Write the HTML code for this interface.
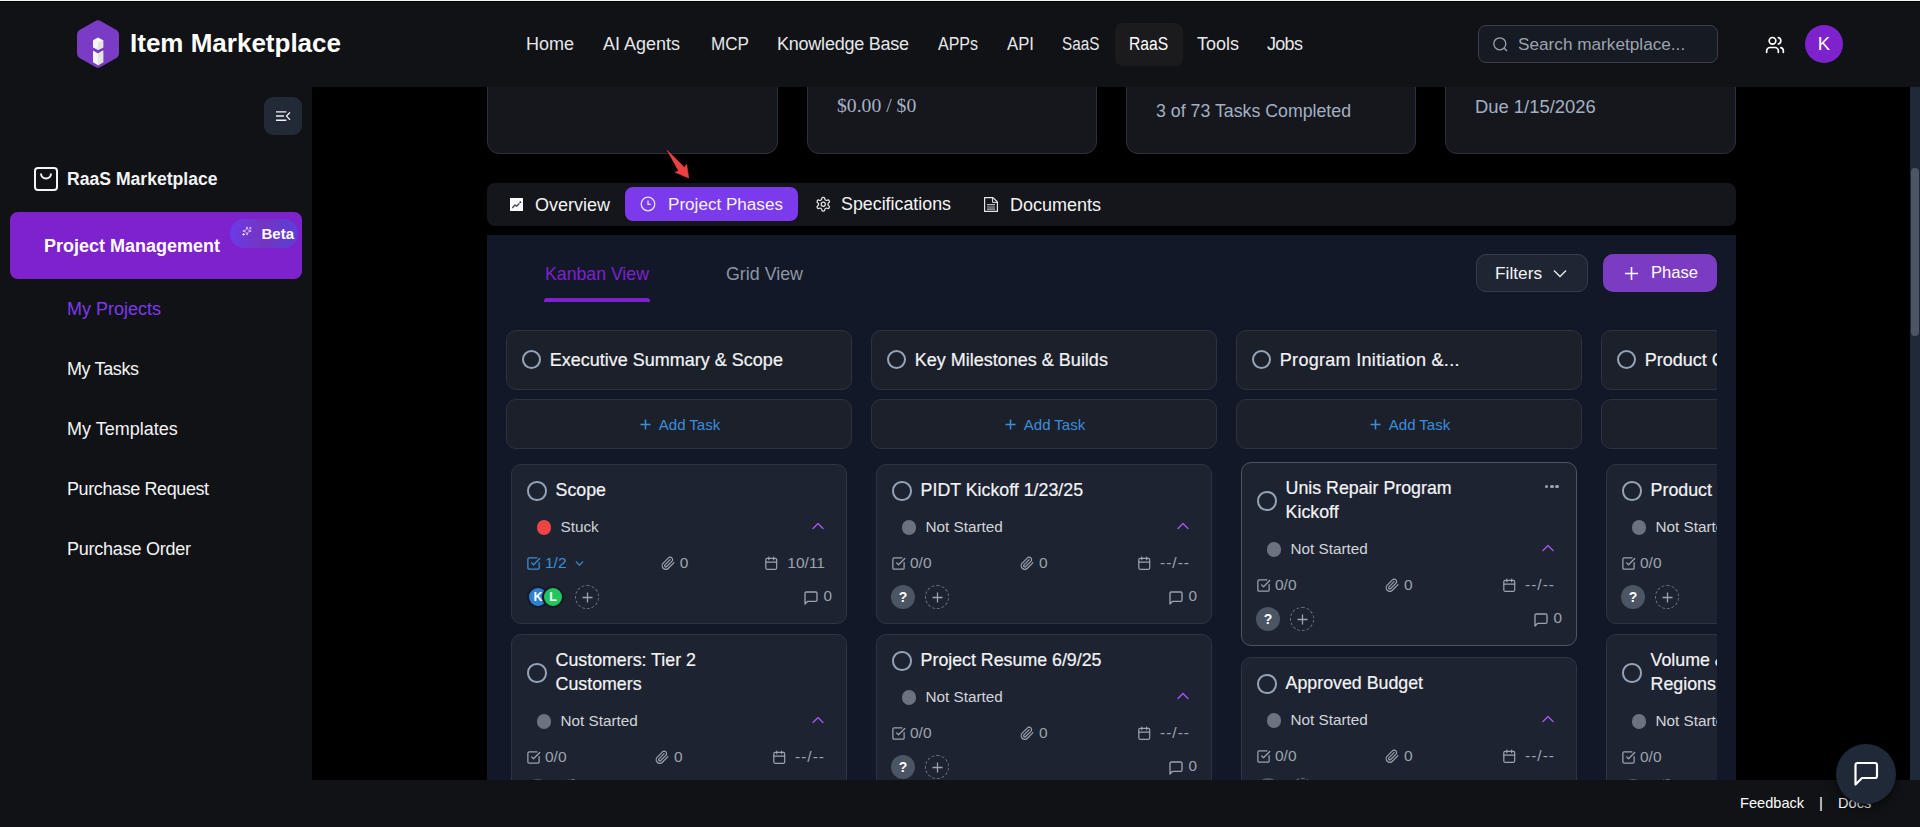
<!DOCTYPE html>
<html><head><meta charset="utf-8">
<style>
*{box-sizing:border-box;margin:0;padding:0}
html,body{width:1920px;height:827px;overflow:hidden;background:#111215;font-family:"Liberation Sans",sans-serif}
.a{position:absolute}
.t{position:absolute;white-space:nowrap;line-height:1}
svg{position:absolute;overflow:visible}
</style></head>
<body>
<!-- top edge lines -->
<div class="a" style="left:0;top:0;width:1920px;height:1px;background:#f4f4f4"></div>
<div class="a" style="left:0;top:1px;width:1920px;height:1px;background:#000"></div>

<!-- HEADER -->
<svg style="left:77px;top:20px" width="42" height="48" viewBox="0 0 42 48">
  <path d="M18 1.2 Q21 -0.5 24 1.2 L39 9.8 Q42 11.5 42 15 L42 33 Q42 36.5 39 38.2 L24 46.8 Q21 48.5 18 46.8 L3 38.2 Q0 36.5 0 33 L0 15 Q0 11.5 3 9.8 Z" fill="#7b3cc5"/>
  <path d="M16 20.2 L21 17.6 L26.2 20.2 L26.2 27.4 L21 30 L16 27.4 Z" fill="#f6f6f4"/>
  <path d="M21 22.6 L26.2 20.2 L26.2 27.4 L21 30 Z" fill="#e6e4e0"/>
  <path d="M16 30.6 L21 33.4 L26.2 30.6 L26.2 42.2 L21 45.2 L16 42.2 Z" fill="#f6f6f4"/>
  <path d="M21 33.4 L26.2 30.6 L26.2 42.2 L21 45.2 Z" fill="#e6e4e0"/>
</svg>
<div class="t" style="left:130px;top:30px;font-size:26px;font-weight:bold;color:#fff">Item Marketplace</div>

<div class="a" style="left:1115px;top:23px;width:68px;height:43px;border-radius:8px;background:#1b1a1d"></div>
<div class="t nav" style="left:526px;top:35px">Home</div>
<div class="t nav" style="left:603px;top:35px">AI Agents</div>
<div class="t nav" style="left:711px;top:35px;transform:scaleX(0.95);transform-origin:0 0">MCP</div>
<div class="t nav" style="left:777px;top:35px;letter-spacing:-0.23px">Knowledge Base</div>
<div class="t nav" style="left:938px;top:35px;transform:scaleX(0.89);transform-origin:0 0">APPs</div>
<div class="t nav" style="left:1007px;top:35px;transform:scaleX(0.93);transform-origin:0 0">API</div>
<div class="t nav" style="left:1062px;top:35px;transform:scaleX(0.85);transform-origin:0 0">SaaS</div>
<div class="t nav" style="left:1129px;top:35px;color:#fff;transform:scaleX(0.87);transform-origin:0 0">RaaS</div>
<div class="t nav" style="left:1197px;top:35px">Tools</div>
<div class="t nav" style="left:1267px;top:35px;letter-spacing:-0.7px">Jobs</div>
<style>.nav{font-size:18px;color:#e5e7eb}</style>

<!-- search -->
<div class="a" style="left:1478px;top:25px;width:240px;height:38px;border-radius:8px;background:#161a22;border:1px solid #3a3f4a"></div>
<svg style="left:1493px;top:37px" width="15" height="15" viewBox="0 0 15 15"><circle cx="6.8" cy="6.8" r="6" fill="none" stroke="#9ca3af" stroke-width="1.3"/><path d="M11.2 11.2 L14 14" stroke="#9ca3af" stroke-width="1.3"/></svg>
<div class="t" style="left:1518px;top:36px;font-size:17.2px;color:#9ca3af">Search marketplace...</div>

<!-- users icon -->
<svg style="left:1765.2px;top:35px" width="20" height="20" viewBox="0 0 24 24" fill="none" stroke="#fff" stroke-width="2" stroke-linecap="round" stroke-linejoin="round"><path d="M16 21v-2a4 4 0 0 0-4-4H6a4 4 0 0 0-4 4v2"/><circle cx="9" cy="7" r="4"/><path d="M22 21v-2a4 4 0 0 0-3-3.87"/><path d="M16 3.13a4 4 0 0 1 0 7.75"/></svg>
<div class="a" style="left:1805px;top:25px;width:38px;height:38px;border-radius:50%;background:#7e22ce"></div>
<div class="t" style="left:1805px;top:35px;width:38px;text-align:center;font-size:18.5px;color:#fff">K</div>

<!-- SIDEBAR -->
<div class="a" style="left:264px;top:97px;width:38px;height:38px;border-radius:9px;background:#222a38"></div>
<svg style="left:276px;top:110px" width="16" height="12" viewBox="0 0 16 12">
  <path d="M0 1.9 H10.4 M0 6 H8 M0 10.2 H10.4" stroke="#eef0f3" stroke-width="1.4"/>
  <path d="M14 2.4 L10.6 6.1 L14 9.9" fill="none" stroke="#eef0f3" stroke-width="1.4"/>
</svg>
<svg style="left:34px;top:167px" width="24" height="24" viewBox="0 0 24 24">
  <rect x="1" y="1" width="22" height="22" rx="3" fill="none" stroke="#f3f4f6" stroke-width="2"/>
  <path d="M7 6.5 A5 5 0 0 0 17 6.5" fill="none" stroke="#f3f4f6" stroke-width="2"/>
</svg>
<div class="t" style="left:67px;top:171px;font-size:17.6px;font-weight:bold;color:#f3f4f6">RaaS Marketplace</div>

<div class="a" style="left:10px;top:212px;width:292px;height:67px;border-radius:8px;background:#7e22ce"></div>
<div class="t" style="left:44px;top:237px;font-size:18px;font-weight:bold;color:#fff">Project Management</div>
<div class="a" style="left:230px;top:219px;width:68px;height:29px;border-radius:15px;background:linear-gradient(90deg,#6b3be8,#7434c0 50%,#5a3fd8)"></div>
<svg style="left:241.5px;top:226px" width="10" height="10" viewBox="0 0 24 24" fill="none" stroke="#e0b0ee" stroke-width="2.4" stroke-linecap="round" stroke-linejoin="round"><path d="M9.937 15.5A2 2 0 0 0 8.5 14.063l-6.135-1.582a.5.5 0 0 1 0-.962L8.5 9.936A2 2 0 0 0 9.937 8.5l1.582-6.135a.5.5 0 0 1 .963 0L14.063 8.5A2 2 0 0 0 15.5 9.937l6.135 1.581a.5.5 0 0 1 0 .964L15.5 14.063a2 2 0 0 0-1.437 1.437l-1.582 6.135a.5.5 0 0 1-.963 0z"/><path d="M20 3v4M22 5h-4"/><circle cx="3.5" cy="20" r="1.5" fill="#fff" stroke="#fff"/></svg>
<div class="t" style="left:261.5px;top:226px;font-size:15px;font-weight:bold;color:#fff">Beta</div>

<div class="t side" style="left:67px;top:300px;color:#7c3aed">My Projects</div>
<div class="t side" style="left:67px;top:360px;letter-spacing:-0.38px">My Tasks</div>
<div class="t side" style="left:67px;top:420px">My Templates</div>
<div class="t side" style="left:67px;top:480px;letter-spacing:-0.4px">Purchase Request</div>
<div class="t side" style="left:67px;top:540px;letter-spacing:-0.23px">Purchase Order</div>
<style>.side{font-size:18px;color:#f3f4f6}</style>

<!-- MAIN -->
<div class="a" id="main" style="left:0;top:0;width:1920px;height:827px;clip-path:inset(87px 10px 47px 312px)">
<div class="a" style="left:312px;top:87px;width:1608px;height:693px;background:#000"></div>
<!-- stat cards -->
<div class="a stat" style="left:487px;width:291px"></div>
<div class="a stat" style="left:807px;width:290px"></div>
<div class="a stat" style="left:1126px;width:290px"></div>
<div class="a stat" style="left:1445px;width:291px"></div>
<div class="t" style="left:837px;top:96px;font-size:19.7px;font-family:'Liberation Serif',serif;color:#a6b2c6">$0.00 / $0</div>
<div class="t" style="left:1156px;top:103px;font-size:17.75px;color:#a3b0c4">3 of 73 Tasks Completed</div>
<div class="t" style="left:1475px;top:98px;font-size:18.4px;color:#a3b0c4">Due 1/15/2026</div>
<!-- arrow -->
<svg style="left:660px;top:145px" width="35" height="40" viewBox="0 0 35 40">
  <path d="M7.2 5.3 L24.5 22.4 L26.6 19.2 L28.7 33.1 L15.1 27.3 L18.6 25.9 Z" fill="#ec4141" stroke="#ec4141" stroke-width="0.6" stroke-linejoin="round"/>
</svg>
<!-- tab bar -->
<div class="a" style="left:487px;top:183px;width:1249px;height:43px;border-radius:8px;background:#15161b"></div>
<div class="a" style="left:625px;top:187px;width:173px;height:34px;border-radius:8px;background:#7c3aed"></div>
<svg style="left:510px;top:198px" width="13" height="13" viewBox="0 0 13 13"><rect width="13" height="13" fill="#fbfbfb"/><path d="M2.6 9.6 L4.9 7 L6.6 8.2 L9 5.8" fill="none" stroke="#3a4250" stroke-width="1.3" stroke-linecap="round" stroke-linejoin="round"/><circle cx="10.3" cy="4.2" r="0.9" fill="#222"/></svg>
<div class="t tab" style="left:535px;top:196px">Overview</div>
<svg style="left:640px;top:196px" width="16" height="16" viewBox="0 0 16 16"><circle cx="8" cy="8" r="6.8" fill="none" stroke="#e9e0fb" stroke-width="1.3"/><path d="M8 4.5 V8.3 H10.8" fill="none" stroke="#e9e0fb" stroke-width="1.3"/></svg>
<div class="t tab" style="left:668px;top:196px;font-size:17.1px">Project Phases</div>
<svg style="left:814.5px;top:196px" width="16.5" height="16.5" viewBox="0 0 24 24"><path d="M12.22 2h-.44a2 2 0 0 0-2 2v.18a2 2 0 0 1-1 1.73l-.43.25a2 2 0 0 1-2 0l-.15-.08a2 2 0 0 0-2.73.73l-.22.38a2 2 0 0 0 .73 2.73l.15.1a2 2 0 0 1 1 1.72v.51a2 2 0 0 1-1 1.74l-.15.09a2 2 0 0 0-.73 2.73l.22.38a2 2 0 0 0 2.73.73l.15-.08a2 2 0 0 1 2 0l.43.25a2 2 0 0 1 1 1.73V20a2 2 0 0 0 2 2h.44a2 2 0 0 0 2-2v-.18a2 2 0 0 1 1-1.73l.43-.25a2 2 0 0 1 2 0l.15.08a2 2 0 0 0 2.73-.73l.22-.39a2 2 0 0 0-.73-2.73l-.15-.08a2 2 0 0 1-1-1.74v-.5a2 2 0 0 1 1-1.74l.15-.09a2 2 0 0 0 .73-2.73l-.22-.38a2 2 0 0 0-2.73-.73l-.15.08a2 2 0 0 1-2 0l-.43-.25a2 2 0 0 1-1-1.73V4a2 2 0 0 0-2-2z" fill="none" stroke="#e5e7eb" stroke-width="1.8"/><circle cx="12" cy="12" r="3" fill="none" stroke="#e5e7eb" stroke-width="1.8"/></svg>
<div class="t tab" style="left:841px;top:196px;font-size:17.83px">Specifications</div>
<svg style="left:984px;top:197px" width="14" height="15" viewBox="0 0 14 15"><path d="M0.6 0.6 H9 L13.4 5 V14.4 H0.6 Z" fill="none" stroke="#e5e7eb" stroke-width="1.2" stroke-linejoin="round"/><path d="M8.6 0.8 V5.4 H13.2" fill="none" stroke="#e5e7eb" stroke-width="1"/><path d="M3 7.6 H11 M3 10 H11 M3 12.2 H11" stroke="#b8bcc4" stroke-width="1.2"/></svg>
<div class="t tab" style="left:1010px;top:196px">Documents</div>

<!-- kanban container -->
<div class="a" style="left:487px;top:235px;width:1249px;height:560px;background:#121827"></div>
<div class="t" style="left:545px;top:266px;font-size:17.7px;color:#7e22ce">Kanban View</div>
<div class="a" style="left:544px;top:298px;width:106px;height:4px;border-radius:3px 3px 0 0;background:#7e22ce"></div>
<div class="t" style="left:726px;top:266px;font-size:17.84px;color:#8e96a3">Grid View</div>
<div class="a" style="left:1476px;top:254px;width:112px;height:38px;border-radius:10px;background:#1f2633;border:1px solid #363e4c"></div>
<div class="t" style="left:1495px;top:265px;font-size:17.3px;color:#f3f4f6">Filters</div>
<svg style="left:1553px;top:269px" width="14" height="9" viewBox="0 0 14 9"><path d="M1 1.5 L7 7.5 L13 1.5" fill="none" stroke="#e5e7eb" stroke-width="1.4"/></svg>
<div class="a" style="left:1603px;top:254px;width:114px;height:38px;border-radius:10px;background:#7b3bc3"></div>
<svg style="left:1624px;top:266px" width="15" height="15" viewBox="0 0 15 15"><path d="M7.5 1 V14 M1 7.5 H14" stroke="#fff" stroke-width="1.6"/></svg>
<div class="t" style="left:1651px;top:265px;font-size:16.6px;color:#fff">Phase</div>
<div id="board" class="a" style="left:506px;top:300px;width:1211px;height:480px;overflow:hidden">
<div class="a colh" style="left:0px;top:30px"></div>
<div class="a ring" style="left:16px;top:50px"></div>
<div class="t" style="left:43.8px;top:51.26px;font-size:18px;color:#f3f4f6;-webkit-text-stroke:0.2px #f3f4f6;">Executive Summary &amp; Scope</div>
<div class="a colh" style="left:0px;top:99px;height:50px"></div>
<div class="a" style="left:0px;top:99px;width:346px;height:50px;display:flex;justify-content:center;align-items:center;padding-left:2px;color:#3b8edb"><svg style="position:relative;margin-right:8px;top:0px" width="11" height="11" viewBox="0 0 11 11"><path d="M5.5 0.5V10.5M0.5 5.5H10.5" stroke="#3b8edb" stroke-width="1.5"/></svg><span style="font-size:15px;position:relative;top:0px">Add Task</span></div>
<div class="a colh" style="left:365px;top:30px"></div>
<div class="a ring" style="left:381px;top:50px"></div>
<div class="t" style="left:408.8px;top:51.26px;font-size:18px;color:#f3f4f6;-webkit-text-stroke:0.2px #f3f4f6;">Key Milestones &amp; Builds</div>
<div class="a colh" style="left:365px;top:99px;height:50px"></div>
<div class="a" style="left:365px;top:99px;width:346px;height:50px;display:flex;justify-content:center;align-items:center;padding-left:2px;color:#3b8edb"><svg style="position:relative;margin-right:8px;top:0px" width="11" height="11" viewBox="0 0 11 11"><path d="M5.5 0.5V10.5M0.5 5.5H10.5" stroke="#3b8edb" stroke-width="1.5"/></svg><span style="font-size:15px;position:relative;top:0px">Add Task</span></div>
<div class="a colh" style="left:730px;top:30px"></div>
<div class="a ring" style="left:746px;top:50px"></div>
<div class="t" style="left:773.8px;top:51.26px;font-size:18px;color:#f3f4f6;-webkit-text-stroke:0.2px #f3f4f6;letter-spacing:0.3px;">Program Initiation &amp;...</div>
<div class="a colh" style="left:730px;top:99px;height:50px"></div>
<div class="a" style="left:730px;top:99px;width:346px;height:50px;display:flex;justify-content:center;align-items:center;padding-left:2px;color:#3b8edb"><svg style="position:relative;margin-right:8px;top:0px" width="11" height="11" viewBox="0 0 11 11"><path d="M5.5 0.5V10.5M0.5 5.5H10.5" stroke="#3b8edb" stroke-width="1.5"/></svg><span style="font-size:15px;position:relative;top:0px">Add Task</span></div>
<div class="a colh" style="left:1095px;top:30px"></div>
<div class="a ring" style="left:1111px;top:50px"></div>
<div class="t" style="left:1138.8px;top:51.26px;font-size:18px;color:#f3f4f6;-webkit-text-stroke:0.2px #f3f4f6;">Product Catalog</div>
<div class="a colh" style="left:1095px;top:99px;height:50px"></div>
<div class="a" style="left:1095px;top:99px;width:346px;height:50px;display:flex;justify-content:center;align-items:center;padding-left:2px;color:#3b8edb"><svg style="position:relative;margin-right:8px;top:0px" width="11" height="11" viewBox="0 0 11 11"><path d="M5.5 0.5V10.5M0.5 5.5H10.5" stroke="#3b8edb" stroke-width="1.5"/></svg><span style="font-size:15px;position:relative;top:0px">Add Task</span></div>
<div class="a card" style="left:5px;top:164px;height:160px"></div>
<div class="a ring" style="left:21px;top:181.25px;width:19.5px;height:19.5px"></div>
<div class="t" style="left:49.6px;top:182.43px;font-size:17.8px;color:#f3f4f6;-webkit-text-stroke:0.2px #f3f4f6;">Scope</div>
<div class="a" style="left:30.5px;top:220px;width:14.5px;height:14.5px;border-radius:50%;background:#ef4444"></div>
<div class="t" style="left:54.5px;top:219.05px;font-size:15.3px;color:#d1d5db;">Stuck</div>
<svg style="left:302px;top:216px" width="20" height="20" viewBox="0 0 24 24" fill="none" stroke="#a855f7" stroke-width="1.6" stroke-linecap="round" stroke-linejoin="round"><path d="m18 15-6-6-6 6"/></svg>
<div class="a meta" style="left:20px;top:253px;width:299px"><div class="g" style="color:#3b8edb"><svg class="ic" width="15" height="15" viewBox="0 0 24 24" fill="none" stroke="#3b8edb" stroke-width="2" stroke-linecap="round" stroke-linejoin="round"><path d="M21 10.5V19a2 2 0 0 1-2 2H5a2 2 0 0 1-2-2V5a2 2 0 0 1 2-2h12.5"/><path d="m9 11 3 3L22 4"/></svg><span style="margin-left:4px">1/2</span><svg class="ic" style="margin-left:6px" width="13" height="13" viewBox="0 0 24 24" fill="none" stroke="#3b8edb" stroke-width="2.2" stroke-linecap="round"><path d="m6 9 6 6 6-6"/></svg></div><div class="g"><svg class="ic" width="14.5" height="14.5" viewBox="0 0 24 24" fill="none" stroke="#9ca3af" stroke-width="2" stroke-linecap="round" stroke-linejoin="round"><path d="m21.44 11.05-9.19 9.19a6 6 0 0 1-8.49-8.49l8.57-8.57A4 4 0 1 1 18 8.84l-8.59 8.57a2 2 0 0 1-2.83-2.83l8.49-8.48"/></svg><span style="margin-left:4px">0</span></div><div class="g"><svg class="ic" width="14.5" height="14.5" viewBox="0 0 24 24" fill="none" stroke="#9ca3af" stroke-width="2" stroke-linecap="round" stroke-linejoin="round"><rect width="18" height="18" x="3" y="4" rx="2"/><path d="M16 2v4M8 2v4M3 10h18"/></svg><span style="margin-left:9px;letter-spacing:0">10/11</span></div></div>
<div class="a av" style="left:21px;top:286px;background:#2f7fd3">K</div>
<div class="a av" style="left:36px;top:286px;background:#22c55e">L</div>
<div class="a dash" style="left:69px;top:285px"></div>
<svg style="left:75.5px;top:291.5px" width="11" height="11" viewBox="0 0 11 11"><path d="M5.5 0.5V10.5M0.5 5.5H10.5" stroke="#9ca3af" stroke-width="1.3"/></svg>
<svg style="left:297px;top:289.5px" width="16" height="16" viewBox="0 0 24 24" fill="none" stroke="#9ca3af" stroke-width="2" stroke-linecap="round" stroke-linejoin="round"><path d="M21 15a2 2 0 0 1-2 2H7l-4 4V5a2 2 0 0 1 2-2h14a2 2 0 0 1 2 2z"/></svg>
<div class="t" style="left:317.6px;top:288.45px;font-size:15.3px;color:#9ca3af;">0</div>
<div class="a card" style="left:5px;top:334px;height:184px"></div>
<div class="a ring" style="left:21px;top:363.25px;width:19.5px;height:19.5px"></div>
<div class="t" style="left:49.6px;top:352.43px;font-size:17.8px;color:#f3f4f6;-webkit-text-stroke:0.2px #f3f4f6;">Customers: Tier 2</div>
<div class="t" style="left:49.6px;top:376.43px;font-size:17.8px;color:#f3f4f6;-webkit-text-stroke:0.2px #f3f4f6;">Customers</div>
<div class="a" style="left:30.5px;top:414px;width:14.5px;height:14.5px;border-radius:50%;background:#6b7280"></div>
<div class="t" style="left:54.5px;top:413.05px;font-size:15.3px;color:#d1d5db;">Not Started</div>
<svg style="left:302px;top:410px" width="20" height="20" viewBox="0 0 24 24" fill="none" stroke="#a855f7" stroke-width="1.6" stroke-linecap="round" stroke-linejoin="round"><path d="m18 15-6-6-6 6"/></svg>
<div class="a meta" style="left:20px;top:447px;width:299px"><div class="g" style="color:#9ca3af"><svg class="ic" width="15" height="15" viewBox="0 0 24 24" fill="none" stroke="#9ca3af" stroke-width="2" stroke-linecap="round" stroke-linejoin="round"><path d="M21 10.5V19a2 2 0 0 1-2 2H5a2 2 0 0 1-2-2V5a2 2 0 0 1 2-2h12.5"/><path d="m9 11 3 3L22 4"/></svg><span style="margin-left:4px">0/0</span></div><div class="g"><svg class="ic" width="14.5" height="14.5" viewBox="0 0 24 24" fill="none" stroke="#9ca3af" stroke-width="2" stroke-linecap="round" stroke-linejoin="round"><path d="m21.44 11.05-9.19 9.19a6 6 0 0 1-8.49-8.49l8.57-8.57A4 4 0 1 1 18 8.84l-8.59 8.57a2 2 0 0 1-2.83-2.83l8.49-8.48"/></svg><span style="margin-left:4px">0</span></div><div class="g"><svg class="ic" width="14.5" height="14.5" viewBox="0 0 24 24" fill="none" stroke="#9ca3af" stroke-width="2" stroke-linecap="round" stroke-linejoin="round"><rect width="18" height="18" x="3" y="4" rx="2"/><path d="M16 2v4M8 2v4M3 10h18"/></svg><span style="margin-left:9px;letter-spacing:1px">--/--</span></div></div>
<div class="a q" style="left:20px;top:479px">?</div>
<div class="a dash" style="left:54px;top:479px"></div>
<svg style="left:60.5px;top:485.5px" width="11" height="11" viewBox="0 0 11 11"><path d="M5.5 0.5V10.5M0.5 5.5H10.5" stroke="#9ca3af" stroke-width="1.3"/></svg>
<svg style="left:297px;top:483.5px" width="16" height="16" viewBox="0 0 24 24" fill="none" stroke="#9ca3af" stroke-width="2" stroke-linecap="round" stroke-linejoin="round"><path d="M21 15a2 2 0 0 1-2 2H7l-4 4V5a2 2 0 0 1 2-2h14a2 2 0 0 1 2 2z"/></svg>
<div class="t" style="left:317.6px;top:482.45px;font-size:15.3px;color:#9ca3af;">0</div>
<div class="a card" style="left:370px;top:164px;height:160px"></div>
<div class="a ring" style="left:386px;top:181.25px;width:19.5px;height:19.5px"></div>
<div class="t" style="left:414.6px;top:182.43px;font-size:17.8px;color:#f3f4f6;-webkit-text-stroke:0.2px #f3f4f6;">PIDT Kickoff 1/23/25</div>
<div class="a" style="left:395.5px;top:220px;width:14.5px;height:14.5px;border-radius:50%;background:#6b7280"></div>
<div class="t" style="left:419.5px;top:219.05px;font-size:15.3px;color:#d1d5db;">Not Started</div>
<svg style="left:667px;top:216px" width="20" height="20" viewBox="0 0 24 24" fill="none" stroke="#a855f7" stroke-width="1.6" stroke-linecap="round" stroke-linejoin="round"><path d="m18 15-6-6-6 6"/></svg>
<div class="a meta" style="left:385px;top:253px;width:299px"><div class="g" style="color:#9ca3af"><svg class="ic" width="15" height="15" viewBox="0 0 24 24" fill="none" stroke="#9ca3af" stroke-width="2" stroke-linecap="round" stroke-linejoin="round"><path d="M21 10.5V19a2 2 0 0 1-2 2H5a2 2 0 0 1-2-2V5a2 2 0 0 1 2-2h12.5"/><path d="m9 11 3 3L22 4"/></svg><span style="margin-left:4px">0/0</span></div><div class="g"><svg class="ic" width="14.5" height="14.5" viewBox="0 0 24 24" fill="none" stroke="#9ca3af" stroke-width="2" stroke-linecap="round" stroke-linejoin="round"><path d="m21.44 11.05-9.19 9.19a6 6 0 0 1-8.49-8.49l8.57-8.57A4 4 0 1 1 18 8.84l-8.59 8.57a2 2 0 0 1-2.83-2.83l8.49-8.48"/></svg><span style="margin-left:4px">0</span></div><div class="g"><svg class="ic" width="14.5" height="14.5" viewBox="0 0 24 24" fill="none" stroke="#9ca3af" stroke-width="2" stroke-linecap="round" stroke-linejoin="round"><rect width="18" height="18" x="3" y="4" rx="2"/><path d="M16 2v4M8 2v4M3 10h18"/></svg><span style="margin-left:9px;letter-spacing:1px">--/--</span></div></div>
<div class="a q" style="left:385px;top:285px">?</div>
<div class="a dash" style="left:419px;top:285px"></div>
<svg style="left:425.5px;top:291.5px" width="11" height="11" viewBox="0 0 11 11"><path d="M5.5 0.5V10.5M0.5 5.5H10.5" stroke="#9ca3af" stroke-width="1.3"/></svg>
<svg style="left:662px;top:289.5px" width="16" height="16" viewBox="0 0 24 24" fill="none" stroke="#9ca3af" stroke-width="2" stroke-linecap="round" stroke-linejoin="round"><path d="M21 15a2 2 0 0 1-2 2H7l-4 4V5a2 2 0 0 1 2-2h14a2 2 0 0 1 2 2z"/></svg>
<div class="t" style="left:682.6px;top:288.45px;font-size:15.3px;color:#9ca3af;">0</div>
<div class="a card" style="left:370px;top:334px;height:160px"></div>
<div class="a ring" style="left:386px;top:351.25px;width:19.5px;height:19.5px"></div>
<div class="t" style="left:414.6px;top:352.43px;font-size:17.8px;color:#f3f4f6;-webkit-text-stroke:0.2px #f3f4f6;">Project Resume 6/9/25</div>
<div class="a" style="left:395.5px;top:390px;width:14.5px;height:14.5px;border-radius:50%;background:#6b7280"></div>
<div class="t" style="left:419.5px;top:389.05px;font-size:15.3px;color:#d1d5db;">Not Started</div>
<svg style="left:667px;top:386px" width="20" height="20" viewBox="0 0 24 24" fill="none" stroke="#a855f7" stroke-width="1.6" stroke-linecap="round" stroke-linejoin="round"><path d="m18 15-6-6-6 6"/></svg>
<div class="a meta" style="left:385px;top:423px;width:299px"><div class="g" style="color:#9ca3af"><svg class="ic" width="15" height="15" viewBox="0 0 24 24" fill="none" stroke="#9ca3af" stroke-width="2" stroke-linecap="round" stroke-linejoin="round"><path d="M21 10.5V19a2 2 0 0 1-2 2H5a2 2 0 0 1-2-2V5a2 2 0 0 1 2-2h12.5"/><path d="m9 11 3 3L22 4"/></svg><span style="margin-left:4px">0/0</span></div><div class="g"><svg class="ic" width="14.5" height="14.5" viewBox="0 0 24 24" fill="none" stroke="#9ca3af" stroke-width="2" stroke-linecap="round" stroke-linejoin="round"><path d="m21.44 11.05-9.19 9.19a6 6 0 0 1-8.49-8.49l8.57-8.57A4 4 0 1 1 18 8.84l-8.59 8.57a2 2 0 0 1-2.83-2.83l8.49-8.48"/></svg><span style="margin-left:4px">0</span></div><div class="g"><svg class="ic" width="14.5" height="14.5" viewBox="0 0 24 24" fill="none" stroke="#9ca3af" stroke-width="2" stroke-linecap="round" stroke-linejoin="round"><rect width="18" height="18" x="3" y="4" rx="2"/><path d="M16 2v4M8 2v4M3 10h18"/></svg><span style="margin-left:9px;letter-spacing:1px">--/--</span></div></div>
<div class="a q" style="left:385px;top:455px">?</div>
<div class="a dash" style="left:419px;top:455px"></div>
<svg style="left:425.5px;top:461.5px" width="11" height="11" viewBox="0 0 11 11"><path d="M5.5 0.5V10.5M0.5 5.5H10.5" stroke="#9ca3af" stroke-width="1.3"/></svg>
<svg style="left:662px;top:459.5px" width="16" height="16" viewBox="0 0 24 24" fill="none" stroke="#9ca3af" stroke-width="2" stroke-linecap="round" stroke-linejoin="round"><path d="M21 15a2 2 0 0 1-2 2H7l-4 4V5a2 2 0 0 1 2-2h14a2 2 0 0 1 2 2z"/></svg>
<div class="t" style="left:682.6px;top:458.45px;font-size:15.3px;color:#9ca3af;">0</div>
<div class="a card hov" style="left:735px;top:162px;height:184px"></div>
<div class="a ring" style="left:751px;top:191.25px;width:19.5px;height:19.5px"></div>
<div class="t" style="left:779.6px;top:180.43px;font-size:17.8px;color:#f3f4f6;-webkit-text-stroke:0.2px #f3f4f6;">Unis Repair Program</div>
<div class="t" style="left:779.6px;top:204.43px;font-size:17.8px;color:#f3f4f6;-webkit-text-stroke:0.2px #f3f4f6;">Kickoff</div>
<div class="a" style="left:1039.0px;top:184.5px;width:3.4px;height:3.4px;border-radius:50%;background:#9ca3af"></div>
<div class="a" style="left:1044.2px;top:184.5px;width:3.4px;height:3.4px;border-radius:50%;background:#9ca3af"></div>
<div class="a" style="left:1049.4px;top:184.5px;width:3.4px;height:3.4px;border-radius:50%;background:#9ca3af"></div>
<div class="a" style="left:760.5px;top:242px;width:14.5px;height:14.5px;border-radius:50%;background:#6b7280"></div>
<div class="t" style="left:784.5px;top:241.05px;font-size:15.3px;color:#d1d5db;">Not Started</div>
<svg style="left:1032px;top:238px" width="20" height="20" viewBox="0 0 24 24" fill="none" stroke="#a855f7" stroke-width="1.6" stroke-linecap="round" stroke-linejoin="round"><path d="m18 15-6-6-6 6"/></svg>
<div class="a meta" style="left:750px;top:275px;width:299px"><div class="g" style="color:#9ca3af"><svg class="ic" width="15" height="15" viewBox="0 0 24 24" fill="none" stroke="#9ca3af" stroke-width="2" stroke-linecap="round" stroke-linejoin="round"><path d="M21 10.5V19a2 2 0 0 1-2 2H5a2 2 0 0 1-2-2V5a2 2 0 0 1 2-2h12.5"/><path d="m9 11 3 3L22 4"/></svg><span style="margin-left:4px">0/0</span></div><div class="g"><svg class="ic" width="14.5" height="14.5" viewBox="0 0 24 24" fill="none" stroke="#9ca3af" stroke-width="2" stroke-linecap="round" stroke-linejoin="round"><path d="m21.44 11.05-9.19 9.19a6 6 0 0 1-8.49-8.49l8.57-8.57A4 4 0 1 1 18 8.84l-8.59 8.57a2 2 0 0 1-2.83-2.83l8.49-8.48"/></svg><span style="margin-left:4px">0</span></div><div class="g"><svg class="ic" width="14.5" height="14.5" viewBox="0 0 24 24" fill="none" stroke="#9ca3af" stroke-width="2" stroke-linecap="round" stroke-linejoin="round"><rect width="18" height="18" x="3" y="4" rx="2"/><path d="M16 2v4M8 2v4M3 10h18"/></svg><span style="margin-left:9px;letter-spacing:1px">--/--</span></div></div>
<div class="a q" style="left:750px;top:307px">?</div>
<div class="a dash" style="left:784px;top:307px"></div>
<svg style="left:790.5px;top:313.5px" width="11" height="11" viewBox="0 0 11 11"><path d="M5.5 0.5V10.5M0.5 5.5H10.5" stroke="#9ca3af" stroke-width="1.3"/></svg>
<svg style="left:1027px;top:311.5px" width="16" height="16" viewBox="0 0 24 24" fill="none" stroke="#9ca3af" stroke-width="2" stroke-linecap="round" stroke-linejoin="round"><path d="M21 15a2 2 0 0 1-2 2H7l-4 4V5a2 2 0 0 1 2-2h14a2 2 0 0 1 2 2z"/></svg>
<div class="t" style="left:1047.6px;top:310.45px;font-size:15.3px;color:#9ca3af;">0</div>
<div class="a card" style="left:735px;top:357px;height:160px"></div>
<div class="a ring" style="left:751px;top:374.25px;width:19.5px;height:19.5px"></div>
<div class="t" style="left:779.6px;top:375.43px;font-size:17.8px;color:#f3f4f6;-webkit-text-stroke:0.2px #f3f4f6;">Approved Budget</div>
<div class="a" style="left:760.5px;top:413px;width:14.5px;height:14.5px;border-radius:50%;background:#6b7280"></div>
<div class="t" style="left:784.5px;top:412.05px;font-size:15.3px;color:#d1d5db;">Not Started</div>
<svg style="left:1032px;top:409px" width="20" height="20" viewBox="0 0 24 24" fill="none" stroke="#a855f7" stroke-width="1.6" stroke-linecap="round" stroke-linejoin="round"><path d="m18 15-6-6-6 6"/></svg>
<div class="a meta" style="left:750px;top:446px;width:299px"><div class="g" style="color:#9ca3af"><svg class="ic" width="15" height="15" viewBox="0 0 24 24" fill="none" stroke="#9ca3af" stroke-width="2" stroke-linecap="round" stroke-linejoin="round"><path d="M21 10.5V19a2 2 0 0 1-2 2H5a2 2 0 0 1-2-2V5a2 2 0 0 1 2-2h12.5"/><path d="m9 11 3 3L22 4"/></svg><span style="margin-left:4px">0/0</span></div><div class="g"><svg class="ic" width="14.5" height="14.5" viewBox="0 0 24 24" fill="none" stroke="#9ca3af" stroke-width="2" stroke-linecap="round" stroke-linejoin="round"><path d="m21.44 11.05-9.19 9.19a6 6 0 0 1-8.49-8.49l8.57-8.57A4 4 0 1 1 18 8.84l-8.59 8.57a2 2 0 0 1-2.83-2.83l8.49-8.48"/></svg><span style="margin-left:4px">0</span></div><div class="g"><svg class="ic" width="14.5" height="14.5" viewBox="0 0 24 24" fill="none" stroke="#9ca3af" stroke-width="2" stroke-linecap="round" stroke-linejoin="round"><rect width="18" height="18" x="3" y="4" rx="2"/><path d="M16 2v4M8 2v4M3 10h18"/></svg><span style="margin-left:9px;letter-spacing:1px">--/--</span></div></div>
<div class="a q" style="left:750px;top:478px">?</div>
<div class="a dash" style="left:784px;top:478px"></div>
<svg style="left:790.5px;top:484.5px" width="11" height="11" viewBox="0 0 11 11"><path d="M5.5 0.5V10.5M0.5 5.5H10.5" stroke="#9ca3af" stroke-width="1.3"/></svg>
<svg style="left:1027px;top:482.5px" width="16" height="16" viewBox="0 0 24 24" fill="none" stroke="#9ca3af" stroke-width="2" stroke-linecap="round" stroke-linejoin="round"><path d="M21 15a2 2 0 0 1-2 2H7l-4 4V5a2 2 0 0 1 2-2h14a2 2 0 0 1 2 2z"/></svg>
<div class="t" style="left:1047.6px;top:481.45px;font-size:15.3px;color:#9ca3af;">0</div>
<div class="a card" style="left:1100px;top:164px;height:160px"></div>
<div class="a ring" style="left:1116px;top:181.25px;width:19.5px;height:19.5px"></div>
<div class="t" style="left:1144.6px;top:182.43px;font-size:17.8px;color:#f3f4f6;-webkit-text-stroke:0.2px #f3f4f6;">Product Launch</div>
<div class="a" style="left:1125.5px;top:220px;width:14.5px;height:14.5px;border-radius:50%;background:#6b7280"></div>
<div class="t" style="left:1149.5px;top:219.05px;font-size:15.3px;color:#d1d5db;">Not Started</div>
<svg style="left:1397px;top:216px" width="20" height="20" viewBox="0 0 24 24" fill="none" stroke="#a855f7" stroke-width="1.6" stroke-linecap="round" stroke-linejoin="round"><path d="m18 15-6-6-6 6"/></svg>
<div class="a meta" style="left:1115px;top:253px;width:299px"><div class="g" style="color:#9ca3af"><svg class="ic" width="15" height="15" viewBox="0 0 24 24" fill="none" stroke="#9ca3af" stroke-width="2" stroke-linecap="round" stroke-linejoin="round"><path d="M21 10.5V19a2 2 0 0 1-2 2H5a2 2 0 0 1-2-2V5a2 2 0 0 1 2-2h12.5"/><path d="m9 11 3 3L22 4"/></svg><span style="margin-left:4px">0/0</span></div><div class="g"><svg class="ic" width="14.5" height="14.5" viewBox="0 0 24 24" fill="none" stroke="#9ca3af" stroke-width="2" stroke-linecap="round" stroke-linejoin="round"><path d="m21.44 11.05-9.19 9.19a6 6 0 0 1-8.49-8.49l8.57-8.57A4 4 0 1 1 18 8.84l-8.59 8.57a2 2 0 0 1-2.83-2.83l8.49-8.48"/></svg><span style="margin-left:4px">0</span></div><div class="g"><svg class="ic" width="14.5" height="14.5" viewBox="0 0 24 24" fill="none" stroke="#9ca3af" stroke-width="2" stroke-linecap="round" stroke-linejoin="round"><rect width="18" height="18" x="3" y="4" rx="2"/><path d="M16 2v4M8 2v4M3 10h18"/></svg><span style="margin-left:9px;letter-spacing:1px">--/--</span></div></div>
<div class="a q" style="left:1115px;top:285px">?</div>
<div class="a dash" style="left:1149px;top:285px"></div>
<svg style="left:1155.5px;top:291.5px" width="11" height="11" viewBox="0 0 11 11"><path d="M5.5 0.5V10.5M0.5 5.5H10.5" stroke="#9ca3af" stroke-width="1.3"/></svg>
<svg style="left:1392px;top:289.5px" width="16" height="16" viewBox="0 0 24 24" fill="none" stroke="#9ca3af" stroke-width="2" stroke-linecap="round" stroke-linejoin="round"><path d="M21 15a2 2 0 0 1-2 2H7l-4 4V5a2 2 0 0 1 2-2h14a2 2 0 0 1 2 2z"/></svg>
<div class="t" style="left:1412.6px;top:288.45px;font-size:15.3px;color:#9ca3af;">0</div>
<div class="a card" style="left:1100px;top:334px;height:184px"></div>
<div class="a ring" style="left:1116px;top:363.25px;width:19.5px;height:19.5px"></div>
<div class="t" style="left:1144.6px;top:352.43px;font-size:17.8px;color:#f3f4f6;-webkit-text-stroke:0.2px #f3f4f6;">Volume &amp; Target</div>
<div class="t" style="left:1144.6px;top:376.43px;font-size:17.8px;color:#f3f4f6;-webkit-text-stroke:0.2px #f3f4f6;">Regions</div>
<div class="a" style="left:1125.5px;top:414px;width:14.5px;height:14.5px;border-radius:50%;background:#6b7280"></div>
<div class="t" style="left:1149.5px;top:413.05px;font-size:15.3px;color:#d1d5db;">Not Started</div>
<svg style="left:1397px;top:410px" width="20" height="20" viewBox="0 0 24 24" fill="none" stroke="#a855f7" stroke-width="1.6" stroke-linecap="round" stroke-linejoin="round"><path d="m18 15-6-6-6 6"/></svg>
<div class="a meta" style="left:1115px;top:447px;width:299px"><div class="g" style="color:#9ca3af"><svg class="ic" width="15" height="15" viewBox="0 0 24 24" fill="none" stroke="#9ca3af" stroke-width="2" stroke-linecap="round" stroke-linejoin="round"><path d="M21 10.5V19a2 2 0 0 1-2 2H5a2 2 0 0 1-2-2V5a2 2 0 0 1 2-2h12.5"/><path d="m9 11 3 3L22 4"/></svg><span style="margin-left:4px">0/0</span></div><div class="g"><svg class="ic" width="14.5" height="14.5" viewBox="0 0 24 24" fill="none" stroke="#9ca3af" stroke-width="2" stroke-linecap="round" stroke-linejoin="round"><path d="m21.44 11.05-9.19 9.19a6 6 0 0 1-8.49-8.49l8.57-8.57A4 4 0 1 1 18 8.84l-8.59 8.57a2 2 0 0 1-2.83-2.83l8.49-8.48"/></svg><span style="margin-left:4px">0</span></div><div class="g"><svg class="ic" width="14.5" height="14.5" viewBox="0 0 24 24" fill="none" stroke="#9ca3af" stroke-width="2" stroke-linecap="round" stroke-linejoin="round"><rect width="18" height="18" x="3" y="4" rx="2"/><path d="M16 2v4M8 2v4M3 10h18"/></svg><span style="margin-left:9px;letter-spacing:1px">--/--</span></div></div>
<div class="a q" style="left:1115px;top:479px">?</div>
<div class="a dash" style="left:1149px;top:479px"></div>
<svg style="left:1155.5px;top:485.5px" width="11" height="11" viewBox="0 0 11 11"><path d="M5.5 0.5V10.5M0.5 5.5H10.5" stroke="#9ca3af" stroke-width="1.3"/></svg>
<svg style="left:1392px;top:483.5px" width="16" height="16" viewBox="0 0 24 24" fill="none" stroke="#9ca3af" stroke-width="2" stroke-linecap="round" stroke-linejoin="round"><path d="M21 15a2 2 0 0 1-2 2H7l-4 4V5a2 2 0 0 1 2-2h14a2 2 0 0 1 2 2z"/></svg>
<div class="t" style="left:1412.6px;top:482.45px;font-size:15.3px;color:#9ca3af;">0</div>
<!--BOARDEND-->
</div>
</div>
<style>
.stat{top:40px;height:114px;border-radius:12px;background:#16171c;border:1px solid #2b303c}
.tab{font-size:18px;color:#f3f4f6}
.colh{width:346px;height:60px;border-radius:10px;background:#1c202b;border:1px solid #2c3240}
.ring{width:19px;height:19px;border-radius:50%;border:2px solid #94a3b8}
.card{width:336px;border-radius:10px;background:#1e2331;border:1px solid #2e3444}
.card.hov{border-color:#4b5563}
.meta{display:flex;justify-content:space-between;align-items:center;height:20px;font-size:15.5px;color:#9ca3af}
.g{display:flex;align-items:center;line-height:1}
.ic{position:relative}
.av{width:22px;height:22px;border-radius:50%;border:2px solid #161b27;color:#fff;font-size:12.5px;font-weight:bold;text-align:center;line-height:18px}
.q{width:24px;height:24px;border-radius:50%;background:#4b5563;color:#fff;font-size:14px;font-weight:bold;text-align:center;line-height:24px}
.dash{width:24px;height:24px;border-radius:50%;border:1px dashed #6b7280}

</style>

<!-- scrollbar -->
<div class="a" style="left:1910px;top:87px;width:10px;height:693px;background:#1f2937"></div>
<div class="a" style="left:1911px;top:168px;width:8px;height:168px;border-radius:4px;background:#4b5563"></div>

<!-- FOOTER -->
<div class="t" style="left:1740px;top:796px;font-size:14.6px;color:#fff">Feedback</div>
<div class="t" style="left:1819px;top:795px;font-size:15px;color:#fff">|</div>
<div class="t" style="left:1838px;top:796px;font-size:14.6px;color:#fff">Docs</div>
<div class="a" style="left:1836px;top:744px;width:60px;height:60px;border-radius:50%;background:#1f2937;box-shadow:0 4px 10px rgba(0,0,0,.5)"></div>
<svg style="left:1854px;top:762px" width="24" height="24" viewBox="0 0 24 24"><path d="M1.5 22.5 V3 A2 2 0 0 1 3.5 1 H21 A2 2 0 0 1 23 3 V14 A2 2 0 0 1 21 16 H8 Z" fill="none" stroke="#fff" stroke-width="2.2" stroke-linejoin="round"/></svg>
</body></html>
